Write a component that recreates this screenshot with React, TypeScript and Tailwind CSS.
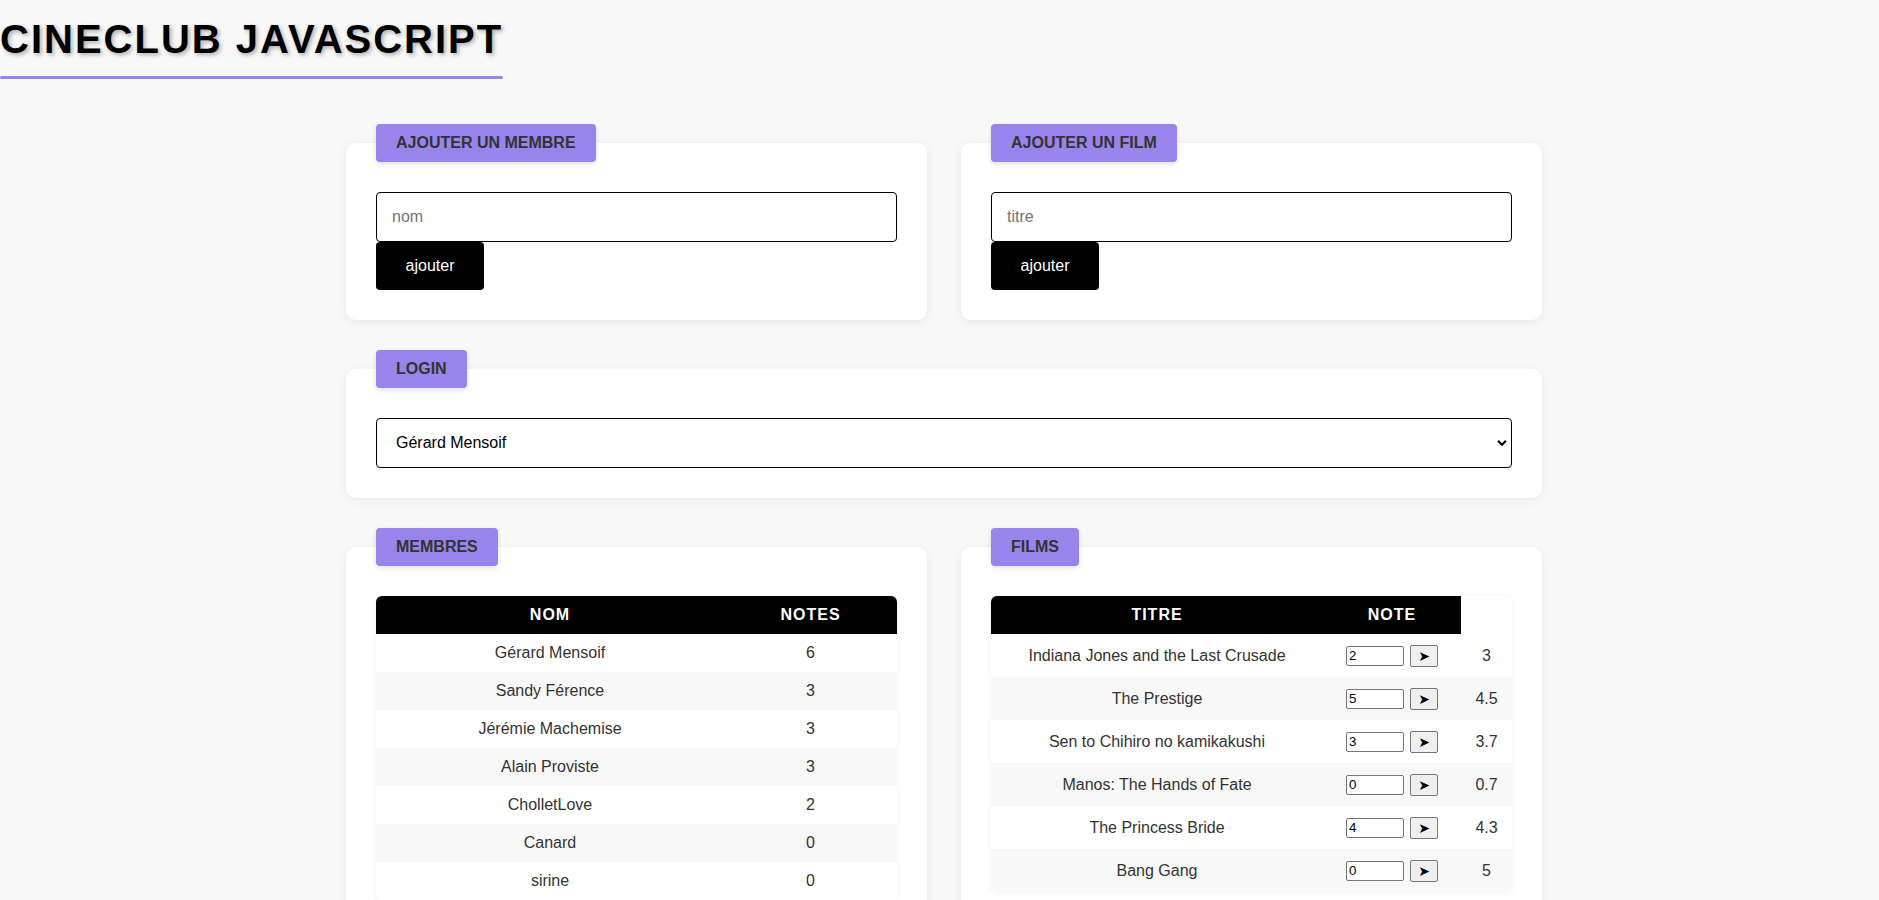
import type { ReactNode } from 'react';

const members = [
  { nom: 'Gérard Mensoif', notes: 6 },
  { nom: 'Sandy Férence', notes: 3 },
  { nom: 'Jérémie Machemise', notes: 3 },
  { nom: 'Alain Proviste', notes: 3 },
  { nom: 'CholletLove', notes: 2 },
  { nom: 'Canard', notes: 0 },
  { nom: 'sirine', notes: 0 },
];

const films = [
  { titre: 'Indiana Jones and the Last Crusade', note: '2', moyenne: '3' },
  { titre: 'The Prestige', note: '5', moyenne: '4.5' },
  { titre: 'Sen to Chihiro no kamikakushi', note: '3', moyenne: '3.7' },
  { titre: 'Manos: The Hands of Fate', note: '0', moyenne: '0.7' },
  { titre: 'The Princess Bride', note: '4', moyenne: '4.3' },
  { titre: 'Bang Gang', note: '0', moyenne: '5' },
];

function Panel({ title, children, className = '' }: { title: string; children: ReactNode; className?: string }) {
  return (
    <section className={`flex flex-col ${className}`}>
      <h2 className="relative z-10 ml-[30px] self-start rounded-[4px] bg-[#9884ea] px-5 py-[10px] text-base leading-[18px] font-bold text-[#333] uppercase shadow-[0_2px_5px_rgba(0,0,0,0.12)]">
        {title}
      </h2>
      <div className="-mt-[19px] rounded-[10px] bg-white px-[30px] pt-[49px] pb-[30px] shadow-[0_2px_10px_rgba(0,0,0,0.07)]">
        {children}
      </div>
    </section>
  );
}

function AddForm({ placeholder }: { placeholder: string }) {
  return (
    <form className="flex flex-col items-start" onSubmit={(e) => e.preventDefault()}>
      <input
        type="text"
        placeholder={placeholder}
        className="h-[50px] w-full rounded-[4px] border border-black bg-white px-[15px] text-base text-black outline-none placeholder:text-[#757575]"
      />
      <button className="h-[48px] w-[108px] rounded-[4px] bg-black text-base text-white">ajouter</button>
    </form>
  );
}

export default function App() {
  return (
    <div className="min-h-screen bg-[#f8f8f8] pb-10 font-['Liberation_Sans',Arial,sans-serif] text-black">
      {/* Titre */}
      <div className="w-fit pt-[16px]">
        <h1 className="text-[40px] leading-[46px] font-bold tracking-[2px] text-black [text-shadow:2px_2px_4px_rgba(0,0,0,0.3)]">
          CINECLUB JAVASCRIPT
        </h1>
        <div className="mt-[14px] h-[3px] rounded-full bg-[#9884ea]" />
      </div>

      <main className="mt-[45px] ml-[346px] grid w-[1196px] grid-cols-2 gap-x-[34px] gap-y-[30px]">
        <Panel title="Ajouter un membre">
          <AddForm placeholder="nom" />
        </Panel>
        <Panel title="Ajouter un film">
          <AddForm placeholder="titre" />
        </Panel>

        <Panel title="Login" className="col-span-2">
          <div className="relative">
            <select className="h-[50px] w-full appearance-none rounded-[4px] border border-black bg-white pl-[19px] text-base text-black outline-none">
              {members.map((m) => (
                <option key={m.nom}>{m.nom}</option>
              ))}
            </select>
            <svg
              className="pointer-events-none absolute top-1/2 right-[5px] -translate-y-1/2"
              width="10"
              height="7"
              viewBox="0 0 10 7"
              fill="none"
              stroke="black"
              strokeWidth="2.2"
            >
              <path d="M1 1.2l4 4 4-4" />
            </svg>
          </div>
        </Panel>

        <Panel title="Membres">
          <div className="overflow-hidden rounded-[6px] bg-white shadow-[0_1px_6px_rgba(0,0,0,0.06)]">
            <table className="w-full border-separate border-spacing-0 text-base text-[#333]">
              <thead>
                <tr className="h-[38px] bg-black text-white">
                  <th className="w-[348px] font-bold tracking-[1px]">NOM</th>
                  <th className="font-bold tracking-[1px]">NOTES</th>
                </tr>
              </thead>
              <tbody>
                {members.map((m, i) => (
                  <tr key={m.nom} className={`h-[38px] ${i % 2 === 1 ? 'bg-[#f8f8f8]' : 'bg-white'}`}>
                    <td className="text-center">{m.nom}</td>
                    <td className="text-center">{m.notes}</td>
                  </tr>
                ))}
              </tbody>
            </table>
          </div>
        </Panel>

        <Panel title="Films">
          <div className="overflow-hidden rounded-[6px] bg-white shadow-[0_1px_6px_rgba(0,0,0,0.06)]">
            <table className="w-full border-separate border-spacing-0 text-base text-[#333]">
              <thead>
                <tr className="h-[38px] text-white">
                  <th className="w-[332px] bg-black font-bold tracking-[1px]">TITRE</th>
                  <th className="w-[138px] bg-black font-bold tracking-[1px]">NOTE</th>
                  <th className="bg-white" />
                </tr>
              </thead>
              <tbody>
                {films.map((f, i) => (
                  <tr key={f.titre} className={`h-[43px] ${i % 2 === 1 ? 'bg-[#f8f8f8]' : 'bg-white'}`}>
                    <td className="text-center">{f.titre}</td>
                    <td>
                      <div className="flex items-center justify-center gap-[6px]">
                        <input
                          type="text"
                          defaultValue={f.note}
                          className="h-[20px] w-[58px] rounded-[2px] border border-[#767676] bg-white px-[2px] text-[13.33px] text-black outline-none"
                        />
                        <button className="flex h-[22px] w-[28px] items-center justify-center rounded-[2px] border border-[#767676] bg-[#efefef] font-['DejaVu_Sans',sans-serif] text-[14px] leading-none text-black">
                          ➤
                        </button>
                      </div>
                    </td>
                    <td className="text-center">{f.moyenne}</td>
                  </tr>
                ))}
              </tbody>
            </table>
          </div>
        </Panel>
      </main>
    </div>
  );
}
